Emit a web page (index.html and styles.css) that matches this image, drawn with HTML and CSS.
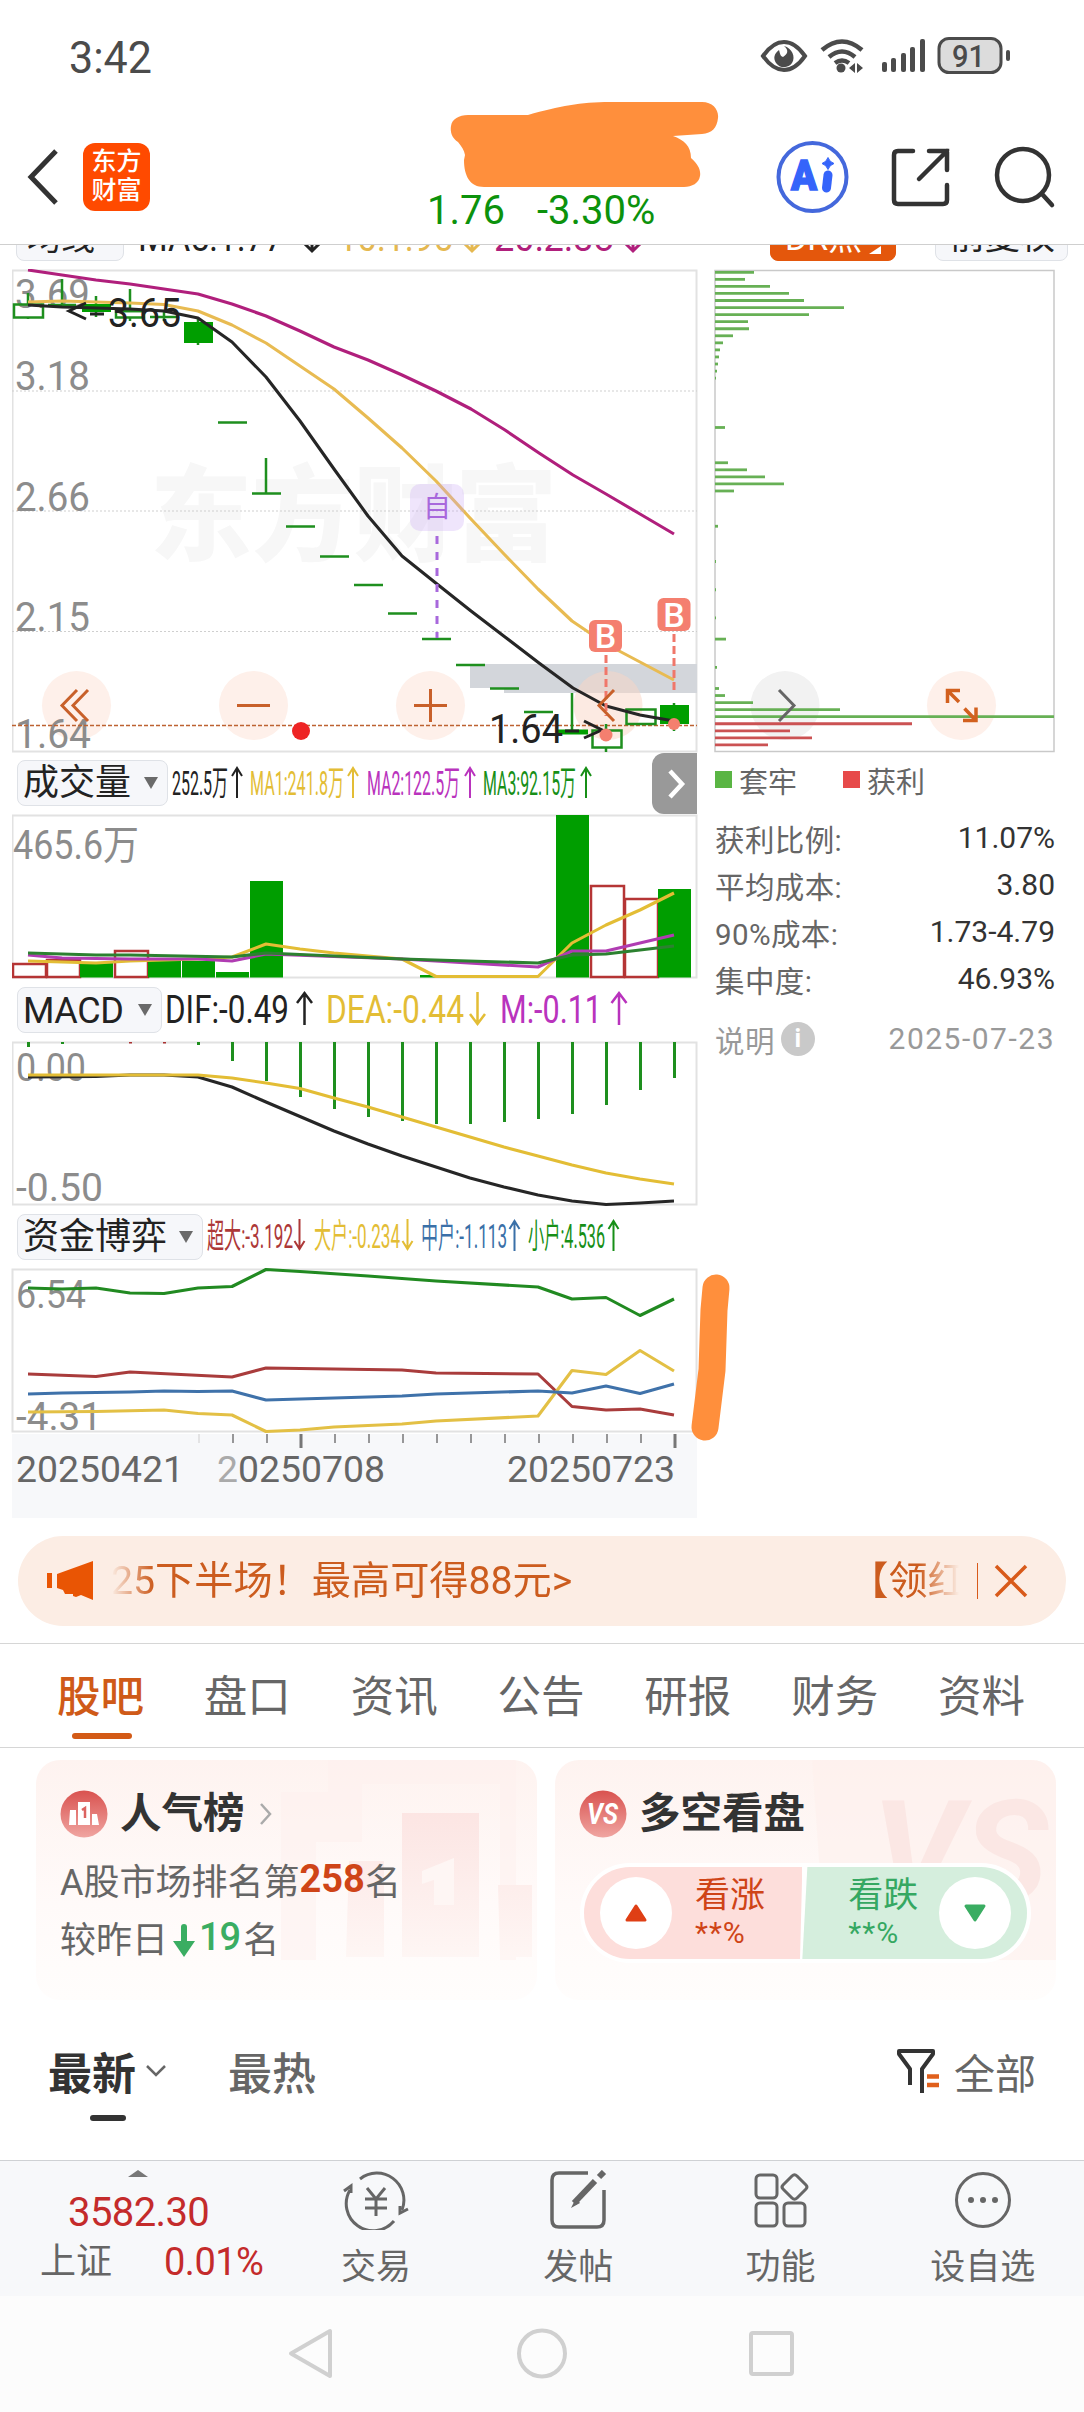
FILE: index.html
```html
<!DOCTYPE html>
<html lang="zh-CN">
<head>
  <meta charset="UTF-8">
  <title>个股行情</title>
  <meta name="viewport" content="width=device-width, initial-scale=1.0">
  <link rel="stylesheet" href="styles.css">
</head>
<body>

<svg class="defs" width="0" height="0">
  <defs>
    <path id="up" d="M0 31V1M-5 9L0 1L5 9"/>
    <path id="down" d="M0 0V30M-5 22L0 30L5 22"/>
    <linearGradient id="badge" x1="0" y1="0" x2="0" y2="1">
      <stop offset="0" stop-color="#d9524f"/>
      <stop offset="1" stop-color="#f0a5a1"/>
    </linearGradient>
    <linearGradient id="faint" x1="0" y1="0" x2="0" y2="1">
      <stop offset="0" stop-color="#fce5e3"/>
      <stop offset="1" stop-color="#fef6f4"/>
    </linearGradient>
  </defs>
</svg>

<div class="status">
  <svg width="1084" height="116" viewBox="0 0 1084 116">
    <text class="clock" x="69" y="73" textLength="83" lengthAdjust="spacingAndGlyphs">3:42</text>
    <g fill="none" stroke="#4b4b4b" stroke-width="4">
      <path d="M763 56C770 46 777 42 784 42S798 46 805 56C798 66 791 70 784 70S770 66 763 56Z"/>
      <path d="M822 50Q842 33 862 50M829 57Q842 46 855 57M835 63Q842 58 849 63" stroke-width="4.5"/>
    </g>
    <g fill="#4b4b4b">
      <path d="M784 46C789 50 788 54 783 57C780 56 780 53 779 50C774 54 773 58 776 63C780 69 789 68 792 63C796 57 792 48 784 46Z"/>
      <circle cx="841" cy="68" r="4.5"/>
      <path d="M849 68L855 63V73ZM863 68L857 63V73Z"/>
      <rect x="882" y="62" width="5" height="10" rx="2"/>
      <rect x="891" y="58" width="5" height="14" rx="2"/>
      <rect x="901" y="53" width="5" height="19" rx="2"/>
      <rect x="910" y="47" width="5" height="25" rx="2"/>
      <rect x="920" y="39" width="5" height="33" rx="2"/>
      <rect x="1006" y="50" width="4" height="11" rx="2"/>
    </g>
    <rect x="939" y="38.500" width="62" height="34" rx="10" fill="#dcdcdc" stroke="#4b4b4b" stroke-width="3"/>
    <text class="level" x="952" y="67" textLength="33" lengthAdjust="spacingAndGlyphs">91</text>
  </svg>
</div>

<header>
  <svg class="back" width="34" height="58" viewBox="0 0 34 58"><path d="M31 3L6 29L31 55" fill="none" stroke="#333" stroke-width="5"/></svg>
  <div class="logo">东方<br>财富</div>
  <div class="quote">
    <svg class="scribble" width="270" height="88" viewBox="450 101 270 88">
      <path fill="#ff8f3c" d="M468 115H528C560 106 580 102 610 102H702C713 102 719 110 718 118C717 128 712 133 702 134L673 136C684 140 691 146 691 158C698 164 701 170 700 176C699 183 692 187 684 187H484C470 187 464 176 464 160L465 155C464 150 462 147 458 142C452 138 450 132 451 126C452 119 459 115 468 115Z"/>
    </svg>
    <div class="price"><span>1.76</span><span>-3.30%</span></div>
  </div>
  <svg class="tools" width="290" height="80" viewBox="770 137 290 80">
    <circle cx="812.500" cy="177" r="34" fill="none" stroke="#4468dc" stroke-width="4"/>
    <text class="ai" x="791" y="190" textLength="26" lengthAdjust="spacingAndGlyphs">A</text>
    <path d="M828 175L826.500 188" stroke="#3564fa" stroke-width="9" stroke-linecap="round"/>
    <path d="M828 157.500Q829.500 162 834 163.500Q829.500 165 828 169.500Q826.500 165 822 163.500Q826.500 162 828 157.500Z" fill="#3564fa" stroke="#3564fa"/>
    <g fill="none" stroke="#333" stroke-width="4.500" stroke-linecap="round">
      <path d="M913 151H898Q894 151 894 155V200Q894 204 898 204H943Q947 204 947 200V185"/>
      <path d="M929 151H947V170M947 151L919 179"/>
      <circle cx="1023" cy="175" r="26"/>
      <path d="M1042 194L1052 205"/>
    </g>
  </svg>
</header>

<div class="ma-row">
  <div class="pill ma-pill">均线<i></i></div>
  <svg class="legend" width="640" height="46" viewBox="126 215 640 46">
    <text x="138" y="251" textLength="146" lengthAdjust="spacingAndGlyphs" fill="#222">MA5:1.77</text>
    <text x="338" y="251" textLength="115" lengthAdjust="spacingAndGlyphs" fill="#e5b850">10:1.95</text>
    <text x="494" y="251" textLength="120" lengthAdjust="spacingAndGlyphs" fill="#b01f7c">20:2.38</text>
    <g fill="none" stroke-width="3">
      <path d="M312 225V251M304 243L312 251L320 243" stroke="#222"/>
      <path d="M472 225V251M464 243L472 251L480 243" stroke="#e5b850"/>
      <path d="M633 225V251M625 243L633 251L641 243" stroke="#b01f7c"/>
    </g>
  </svg>
  <div class="pill dr">DR点<b></b></div>
  <div class="pill adjust">前复权</div>
</div>

<div class="board">
  <div class="charts">

    <!-- K line -->
    <svg width="686" height="484" viewBox="12 269 686 484">
      <text class="watermark" x="150" y="553" textLength="407" lengthAdjust="spacingAndGlyphs">东方财富</text>
      <rect class="frame" x="12.500" y="270.500" width="684" height="481"/>
      <path class="grid" d="M12 391H697M12 511H697M12 631.500H697"/>
      <path d="M470 664H697V693H504V688H470Z" fill="#d3d6db"/>
      <g fill="#fef0ea">
        <circle cx="76.500" cy="705.500" r="34.500"/>
        <circle cx="253.500" cy="705.500" r="34.500"/>
        <circle cx="430.500" cy="705.500" r="34.500"/>
        <circle cx="608" cy="705.500" r="34.500" fill="#f9d6c6" fill-opacity=".5"/>
      </g>
      <g class="axis">
        <text x="15" y="308" textLength="75" lengthAdjust="spacingAndGlyphs">3.69</text>
        <text x="15" y="390" textLength="75" lengthAdjust="spacingAndGlyphs">3.18</text>
        <text x="15" y="511" textLength="75" lengthAdjust="spacingAndGlyphs">2.66</text>
        <text x="15" y="631" textLength="75" lengthAdjust="spacingAndGlyphs">2.15</text>
        <text x="15" y="748" textLength="76" lengthAdjust="spacingAndGlyphs">1.64</text>
      </g>
      <path d="M12 725.500H697" stroke="#bd6231" stroke-width="1.500" stroke-dasharray="4 2"/>
      <g class="candle">
        <path d="M28 293V304M28 318V319M62 279V305M48 305H76M96 296V317M130 289V311M130 318V321M116 311H144M164 311V321M150 317H178M198 318V345"/>
        <path d="M218 422.500H247M266 458V493M252 493.500H281M286 526.500H315M320 556.500H349M354 585H383M388 613.500H417M422 639H451M456 665H485M490 688.500H519M524 712H553M572 693V732M606 724V730M606 748V752M674 703V731"/>
        <path d="M14 304.500H43V317.500H14ZM116 311H144V317.500H116ZM592.500 730.500H621.500V747.500H592.500ZM626.500 709.500H655.500V724H626.500Z"/>
        <path class="solid" d="M82 304H111V312H82ZM184 322H213V343H184ZM558 729.500H588V734.500H558ZM660 705H689V724H660Z"/>
      </g>
      <g class="line">
        <polyline stroke="#b01f7c" points="28,270 62,275 96,280 130,284 164,289 198,294 232,304 266,316 300,331 334,347 368,360 402,375 436,391 471,409 505,430 539,453 573,475 606,494 640,514 674,534"/>
        <polyline stroke="#e8bb52" points="28,302 62,301 96,302 130,303 164,304.500 198,311 232,325 266,343 300,366 334,389 368,418 402,448 436,481 470,518 504,554 538,589 572,621 606,644 640,662 674,680"/>
        <polyline stroke="#262626" points="28,305 62,307 96,308 130,309 164,311 198,318 232,342 266,377 300,421 334,469 368,516 402,556 437,584 471,611 505,637 539,663 573,688 606,706 640,715 674,721"/>
      </g>
      <g class="mark">
        <text x="108" y="327" textLength="73" lengthAdjust="spacingAndGlyphs">3.65</text>
        <text x="489" y="743" textLength="74" lengthAdjust="spacingAndGlyphs">1.64</text>
        <path d="M86 303L69 311L86 319M90 314H104M565 731H579M584 721L602 730L584 738"/>
      </g>
      <rect x="410" y="484" width="54" height="47" rx="10" fill="#c9a8f5" fill-opacity=".3"/>
      <text class="zi" x="423" y="517">自</text>
      <path d="M437 536V638" stroke="#a868dc" stroke-width="3" stroke-dasharray="8 8"/>
      <g fill="#f47f6f">
        <rect x="589" y="620" width="33" height="32" rx="6"/>
        <rect x="657.500" y="598" width="33" height="33" rx="6"/>
        <circle cx="606" cy="735" r="6.500"/>
        <circle cx="674" cy="724" r="6"/>
      </g>
      <path d="M606 655V716M674 634V691" stroke="#f0776a" stroke-width="3" stroke-dasharray="8 4"/>
      <g class="buy">
        <text x="605.500" y="648">B</text>
        <text x="674" y="627">B</text>
      </g>
      <g fill="none" stroke="#c8602a" stroke-width="3">
        <path d="M77 690L62 705.500L77 721M88 690L73 705.500L88 721M237 705.500H270M414 705.500H447M430.500 689V722M614 690L599 705.500L614 721"/>
      </g>
      <circle cx="301" cy="731" r="9" fill="#ee2424"/>
    </svg>

    <!-- volume -->
    <div class="ind-row">
      <div class="pill w-vol">成交量<i></i></div>
      <svg class="legend" width="484" height="61" viewBox="168 753 484 61">
        <text x="172" y="795" textLength="56" lengthAdjust="spacingAndGlyphs" fill="#222">252.5万</text>
        <text x="250" y="795" textLength="94" lengthAdjust="spacingAndGlyphs" fill="#e3bd35">MA1:241.8万</text>
        <text x="367" y="795" textLength="93" lengthAdjust="spacingAndGlyphs" fill="#b933bd">MA2:122.5万</text>
        <text x="483" y="795" textLength="93" lengthAdjust="spacingAndGlyphs" fill="#178f17">MA3:92.15万</text>
        <g fill="none" stroke-width="2">
          <use href="#up" x="237" y="767" stroke="#222"/>
          <use href="#up" x="353" y="767" stroke="#e3bd35"/>
          <use href="#up" x="470" y="767" stroke="#b933bd"/>
          <use href="#up" x="586" y="767" stroke="#178f17"/>
        </g>
      </svg>
      <div class="expand"><svg width="20" height="32" viewBox="0 0 20 32"><path d="M4 3L16 16L4 29" fill="none" stroke="#fff" stroke-width="4.500"/></svg></div>
    </div>
    <svg width="686" height="166" viewBox="12 814 686 166">
      <rect class="frame" x="12.500" y="815.500" width="684" height="162"/>
      <text class="axis" x="13" y="859" textLength="126" lengthAdjust="spacingAndGlyphs">465.6万</text>
      <g id="volume"></g>
      <g class="line">
        <polyline stroke="#e3bd35" points="28,961 62,962 96,963 130,961 198,959 232,957 266,944 300,949 334,953 402,959 436,976.500 538,976.500 572,943 606,925 640,910 674,893"/>
        <polyline stroke="#b03cb2" points="28,955 62,958 130,959 198,959 232,961 266,954 402,959 538,967 572,951 606,951 674,935"/>
        <polyline stroke="#2c8130" points="28,953 96,955 130,955 232,957 266,953 334,956 402,959 538,963 572,955 606,954 674,946"/>
      </g>
    </svg>

    <!-- MACD -->
    <div class="ind-row">
      <div class="pill w-macd"><span>MACD</span><i></i></div>
      <svg class="legend big" width="530" height="61" viewBox="162 980 530 61">
        <text x="165" y="1023" textLength="124" lengthAdjust="spacingAndGlyphs" fill="#222">DIF:-0.49</text>
        <text x="326" y="1023" textLength="138" lengthAdjust="spacingAndGlyphs" fill="#e3bd35">DEA:-0.44</text>
        <text x="500" y="1023" textLength="102" lengthAdjust="spacingAndGlyphs" fill="#b933bd">M:-0.11</text>
        <g fill="none" stroke-width="2.500">
          <path d="M304.500 1025V993M297 1003L304.500 993L312 1003" stroke="#222"/>
          <path d="M477.500 992V1024M470 1014L477.500 1024L485 1014" stroke="#e3bd35"/>
          <path d="M619 1025V993M611.500 1003L619 993L626.500 1003" stroke="#b933bd"/>
        </g>
      </svg>
    </div>
    <svg width="686" height="166" viewBox="12 1041 686 166">
      <rect class="frame" x="12.500" y="1042.500" width="684" height="162"/>
      <text class="axis sm" x="16" y="1081" textLength="70" lengthAdjust="spacingAndGlyphs">0.00</text>
      <text class="axis sm" x="16" y="1201" textLength="87" lengthAdjust="spacingAndGlyphs">-0.50</text>
      <g id="macd"></g>
      <g class="line">
        <polyline stroke="#262626" points="28,1077 96,1076.500 130,1075 164,1075 198,1077 232,1087 266,1102 300,1116.500 334,1131 368,1144 402,1156 436,1167 470,1178 504,1187 538,1195 572,1201 606,1204.500 640,1203 674,1201"/>
        <polyline stroke="#e3bd35" points="28,1075 198,1075 232,1078 266,1083 300,1088.500 334,1098 368,1107 402,1117 436,1127 470,1137 504,1147 538,1156 572,1165 606,1173 640,1179 674,1184"/>
      </g>
    </svg>

    <!-- funds -->
    <div class="ind-row">
      <div class="pill w-fund">资金博弈<i></i></div>
      <svg class="legend" width="490" height="61" viewBox="203 1207 490 61">
        <text x="207" y="1248" textLength="86" lengthAdjust="spacingAndGlyphs" fill="#ad3838">超大:-3.192</text>
        <text x="314" y="1248" textLength="86" lengthAdjust="spacingAndGlyphs" fill="#e3bd35">大户:-0.234</text>
        <text x="421" y="1248" textLength="86" lengthAdjust="spacingAndGlyphs" fill="#3a70a8">中户:-1.113</text>
        <text x="528" y="1248" textLength="77" lengthAdjust="spacingAndGlyphs" fill="#178f17">小户:4.536</text>
        <g fill="none" stroke-width="2">
          <use href="#down" x="299.500" y="1219" stroke="#ad3838"/>
          <use href="#down" x="407.500" y="1219" stroke="#e3bd35"/>
          <use href="#up" x="514.500" y="1220" stroke="#3a70a8"/>
          <use href="#up" x="613.500" y="1220" stroke="#178f17"/>
        </g>
      </svg>
    </div>
    <svg class="funds" width="686" height="166" viewBox="12 1268 686 166">
      <rect class="frame" x="12.500" y="1269.500" width="684" height="162"/>
      <text class="axis sm" x="16" y="1308" textLength="70" lengthAdjust="spacingAndGlyphs">6.54</text>
      <text class="axis sm" x="16" y="1430" textLength="86" lengthAdjust="spacingAndGlyphs">-4.31</text>
      <g class="line">
        <polyline stroke="#218a21" points="28,1288 62,1289 96,1288 130,1293 164,1293.500 198,1288 232,1286.500 266,1269.500 300,1271.500 368,1276 436,1281 538,1287 572,1299 606,1297.500 640,1315.500 674,1299"/>
        <polyline stroke="#a93c3c" points="28,1374 96,1376.500 130,1372 232,1377 266,1368 402,1370 436,1373 538,1374 572,1406.500 606,1410 640,1409 674,1415"/>
        <polyline stroke="#e3c045" points="28,1412 96,1411.500 164,1410 198,1413.500 232,1415 266,1431.500 300,1430 334,1427 402,1424 436,1421 538,1416 572,1370.500 606,1374.500 640,1350.500 674,1371"/>
        <polyline stroke="#3f72aa" points="28,1394 62,1393 96,1392.500 130,1392 164,1391 198,1391.500 232,1391 266,1400 402,1396 436,1394 538,1391 572,1393 606,1386 640,1393.500 674,1384"/>
      </g>
      <path d="M716 1288L714 1310L712 1370L705 1427" fill="none" stroke="#ff8f3c" stroke-width="27" stroke-linecap="round" stroke-linejoin="round"/>
    </svg>
    <svg class="dates" width="685" height="84" viewBox="12 1434 685 84">
      <g id="ticks"></g>
      <text x="16" y="1482" textLength="168" lengthAdjust="spacingAndGlyphs">20250421</text>
      <text x="217" y="1482" textLength="168" lengthAdjust="spacingAndGlyphs"><tspan fill="#aaa">2</tspan>0250708</text>
      <text x="507" y="1482" textLength="168" lengthAdjust="spacingAndGlyphs">20250723</text>
    </svg>
  </div>

  <!-- cost distribution -->
  <div class="chips">
    <svg width="342" height="484" viewBox="714 269 342 484">
      <circle cx="785" cy="705.500" r="34.500" fill="#f2f2f2"/>
      <circle cx="961.500" cy="705.500" r="34.500" fill="#fef0ea"/>
      <rect x="715" y="270.500" width="339" height="481" fill="none" stroke="#c9c9c9" stroke-width="1.500"/>
      <g id="chips"></g>
      <path d="M779 690L794 705.500L779 721" fill="none" stroke="#666" stroke-width="3"/>
      <path d="M960 690.500H947.500V703M947.500 690.500L959 702M963 720.500H976V707.500M976 720.500L964.500 708.500" fill="none" stroke="#d2601e" stroke-width="3.500"/>
    </svg>
    <div class="key"><i class="green"></i><span>套牢</span><i class="red"></i><span>获利</span></div>
    <div class="stat"><span>获利比例:</span><b>11.07%</b></div>
    <div class="stat"><span>平均成本:</span><b>3.80</b></div>
    <div class="stat"><span>90%成本:</span><b>1.73-4.79</b></div>
    <div class="stat"><span>集中度:</span><b>46.93%</b></div>
    <div class="stat note"><span>说明</span><em>i</em><b>2025-07-23</b></div>
  </div>
</div>

<div class="banner">
  <svg width="48" height="42" viewBox="46 1560 48 42" fill="#e95504">
    <rect x="47" y="1573" width="5" height="15"/>
    <path d="M57 1574L93 1561V1600L81 1595L76 1597L73 1596V1594H65L63 1590L57 1588Z"/>
  </svg>
  <div class="marquee"><span>25下半场！最高可得88元&gt;</span><span class="next">【领红包】</span></div>
  <i class="bar"></i>
  <svg width="34" height="34" viewBox="0 0 34 34"><path d="M2 2L32 32M32 2L2 32" stroke="#d85a1a" stroke-width="3.500"/></svg>
</div>

<nav class="tabs">
  <a class="active">股吧</a><a>盘口</a><a>资讯</a><a>公告</a><a>研报</a><a>财务</a><a>资料</a>
</nav>

<div class="cards">
  <div class="card rank">
    <svg class="card-bg" width="501" height="240" viewBox="36 1760 501 240">
      <path d="M328 1760H516V1960H500V1784H362V1842H316V1960H281V1792H328Z" fill="#fdf0ed" opacity=".5"/>
      <path d="M402 1813H479V1957H402ZM349 1861H384V1957H346ZM498 1885H532V1957H500Z" fill="url(#faint)"/>
      <path d="M422 1871L454 1858V1905H434V1880L422 1884Z" fill="#fef6f4"/>
    </svg>
    <div class="title">
      <svg width="48" height="48" viewBox="0 0 48 48">
        <circle cx="24" cy="24" r="23.500" fill="url(#badge)"/>
        <path d="M10 20H16V35H9ZM18 12H30V35H18ZM32 24H37L39 35H32Z" fill="#fff"/>
        <path d="M22 20L25 18V28" fill="none" stroke="#dc6360" stroke-width="2.500"/>
      </svg>
      <h2>人气榜</h2>
      <svg class="more" width="14" height="24" viewBox="0 0 14 24"><path d="M2 2L11 12L2 22" fill="none" stroke="#aaa" stroke-width="2.500"/></svg>
    </div>
    <p>A股市场排名第<b>258</b>名</p>
    <p class="second">较昨日<svg width="24" height="34" viewBox="0 0 24 34"><path d="M12 3V20" stroke="#3aad62" stroke-width="6" stroke-linecap="round"/><path d="M1 17H23L12 33Z" fill="#3aad62"/></svg><b class="down">19</b>名</p>
  </div>
  <div class="card">
    <svg class="card-bg" width="501" height="240" viewBox="555 1760 501 240">
      <path d="M812 1760H1056V1960H826Z" fill="#fdf0ed" opacity=".6"/>
      <text class="big-vs" x="872" y="1902" textLength="176" lengthAdjust="spacingAndGlyphs">VS</text>
    </svg>
    <div class="title">
      <svg width="48" height="48" viewBox="0 0 48 48">
        <circle cx="24" cy="24" r="23.500" fill="url(#badge)"/>
        <text class="vs" x="8" y="34" textLength="31" lengthAdjust="spacingAndGlyphs">VS</text>
      </svg>
      <h2>多空看盘</h2>
    </div>
    <div class="vote">
      <div class="rise"><span class="knob"><svg width="24" height="20" viewBox="0 0 24 20"><path d="M12 3L21 17H3Z" fill="#df3f15" stroke="#df3f15" stroke-width="3" stroke-linejoin="round"/></svg></span><div>看涨<small>**%</small></div></div>
      <div class="fall"><div>看跌<small>**%</small></div><span class="knob"><svg width="24" height="20" viewBox="0 0 24 20"><path d="M12 17L21 3H3Z" fill="#3aad62" stroke="#3aad62" stroke-width="3" stroke-linejoin="round"/></svg></span></div>
    </div>
  </div>
</div>

<div class="sort">
  <a class="active">最新</a>
  <svg width="22" height="16" viewBox="0 0 22 16"><path d="M2 3L11 12L20 3" fill="none" stroke="#666" stroke-width="2.500"/></svg>
  <a class="hot">最热</a>
  <svg class="funnel" width="44" height="48" viewBox="895 2048 44 48">
    <path d="M909 2086V2070L898 2055V2052H932V2055L921 2070V2094" fill="none" stroke="#333" stroke-width="4" stroke-linejoin="round"/>
    <path d="M926 2077.500H938M926 2086H938" stroke="#e0601c" stroke-width="4.500"/>
  </svg>
  <a class="all">全部</a>
</div>

<div class="dock">
  <div class="index">
    <i class="caret"></i>
    <div class="point">3582.30</div>
    <div class="change"><span>上证</span><b>0.01%</b></div>
  </div>
  <div class="item">
    <svg width="66" height="60" viewBox="0 0 66 60" fill="none" stroke="#666" stroke-width="3">
      <path d="M17 9A27 27 0 0 1 59 40M51 51A27 27 0 0 1 7 20"/>
      <path d="M1 21L8 16V23M65 39L57 43V36"/>
      <path d="M24 18L33 29L42 18M22 29H44M22 38H44M33 29V46"/>
    </svg>
    <span>交易</span>
  </div>
  <div class="item">
    <svg width="66" height="60" viewBox="0 0 66 60" fill="none" stroke="#666" stroke-width="3.500">
      <path d="M43 3H14Q7 3 7 10V50Q7 57 14 57H52Q59 57 59 50V20"/>
      <path d="M50 11L29 33" stroke-width="6"/><path d="M31 28L26 38L35 33Z" fill="#666" stroke="none"/><path d="M54 7L59 2" stroke-width="6"/>
    </svg>
    <span>发帖</span>
  </div>
  <div class="item">
    <svg width="66" height="60" viewBox="0 0 66 60" fill="none" stroke="#666" stroke-width="3">
      <rect x="8" y="5" width="21" height="23" rx="4"/>
      <rect x="8" y="33" width="21" height="23" rx="4"/>
      <rect x="36" y="33" width="21" height="23" rx="4"/>
      <path d="M44 6Q46.500 3.500 49 6L58 15Q60 17 58 19L49 28Q46.500 30.500 44 28L35 19Q33 17 35 15Z"/>
    </svg>
    <span>功能</span>
  </div>
  <div class="item">
    <svg width="66" height="60" viewBox="0 0 66 60">
      <circle cx="33" cy="30" r="26.500" fill="none" stroke="#666" stroke-width="3"/>
      <g fill="#666"><circle cx="21" cy="30" r="3"/><circle cx="33" cy="30" r="3"/><circle cx="45" cy="30" r="3"/></g>
    </svg>
    <span>设自选</span>
  </div>
</div>

<div class="sysnav">
  <svg width="1084" height="116" viewBox="0 2296 1084 116" fill="none" stroke="#d0d0d0" stroke-width="4" stroke-linejoin="round">
    <path d="M330 2331V2376L291 2353.500Z"/>
    <circle cx="542" cy="2353.500" r="23"/>
    <rect x="751" y="2333" width="41" height="41" rx="2"/>
  </svg>
</div>

<script>
  // [top, isUp] per trading day, null = almost no volume
  const volume = [[964, 1], [960, 1], [963, 0], [951, 1], [961, 0], [961, 0], [972, 0], [881, 0],
    null, null, null, null, [975, 0], null, null, null,
    [815, 0], [886, 1], [899, 1], [889, 0]];
  const macd = [1047, 1044, 0, -1, -1, 1045, 1061, 1081, 1097, 1109, 1117, 1121, 1124, 1124, 1122, 1119, 1114, 1105, 1090, 1078];
  // price level -> bar length
  const chips = {0: 39, 1: 30, 2: 55, 3: 74, 4: 89, 5: 129, 6: 94, 7: 33, 8: 34, 9: 18, 10: 8, 11: 5, 12: 4, 13: 3, 14: 2, 15: 1,
    22: 10, 27: 13, 28: 32, 29: 50, 30: 69, 31: 19, 36: 3, 41: 1, 45: 1, 49: 1, 52: 11, 56: 2,
    59: 4, 60: 10, 61: 38, 62: 125, 63: 339, 64: 197, 65: 75, 66: 97, 67: 53};

  let html = '';
  volume.forEach((v, i) => {
    if (!v) return;
    const x = 12 + 34 * i;
    html += v[1]
      ? `<rect x="${x + 1}" y="${v[0]}" width="33" height="${977 - v[0]}" fill="#fff" stroke="#b53535" stroke-width="2.5"/>`
      : `<rect x="${x}" y="${v[0]}" width="33" height="${977.5 - v[0]}" fill="#009e00"/>`;
  });
  document.getElementById('volume').innerHTML = html;

  html = '';
  macd.forEach((y, i) => {
    const x = 28.5 + 34 * i;
    if (y) html += `<path d="M${x} 1042V${y > 0 ? y : 1043.5}" stroke="${y > 0 ? '#1e8f1e' : '#a33'}" stroke-width="3"/>`;
  });
  document.getElementById('macd').innerHTML = html;

  html = '';
  for (const k in chips) {
    const y = 272.3 + 7.054 * k;
    html += `<path d="M715 ${y}h${chips[k]}" stroke="${k > 63 ? '#cb5253' : '#67b055'}" stroke-width="2.8"/>`;
  }
  document.getElementById('chips').innerHTML = html;

  html = '';
  for (let i = 0; i < 15; i++) {
    const major = i === 3 || i === 14;
    html += `<path d="M${199 + 34 * i} 1434v${major ? 14 : 9}" stroke="${i ? '#777' : '#ddd'}" stroke-width="${major ? 3 : 1.5}"/>`;
  }
  document.getElementById('ticks').innerHTML = html;
</script>

</body>
</html>
```
FILE: styles.css
```css
* { box-sizing: border-box; }
body {
  margin: 0;
  width: 1084px;
  background: #fff;
  color: #333;
  font-family: Roboto, "Noto Sans CJK SC", sans-serif;
}
svg { display: block; flex: none; }
.defs { position: absolute; }

.status { height: 116px; }
.clock { font-size: 45px; fill: #4b4b4b; }
.level { font-size: 31px; font-weight: 500; fill: #4b4b4b; }

header {
  height: 129px;
  display: flex;
  border-bottom: 1px solid #cfcfcf;
}
.back { margin: 32px 0 0 25px; }
.logo {
  width: 67px;
  height: 68px;
  margin: 27px 0 0 24px;
  padding-top: 4px;
  border-radius: 12px;
  background: #ff4a00;
  color: #fff;
  font-size: 25px;
  font-weight: 500;
  line-height: 29px;
  text-align: center;
}
.quote { position: relative; width: 570px; margin-left: 50px; }
.scribble { position: absolute; left: 250px; top: -15px; }
.price {
  display: flex;
  gap: 32px;
  padding: 72px 0 0 227px;
  color: #0c920c;
  font-size: 40px;
  line-height: 46px;
}
.tools { margin-top: 21px; }
.ai { font-size: 42px; font-weight: 900; fill: #3564fa; stroke: #3564fa; stroke-width: 1.5; }

.pill {
  flex: none;
  display: flex;
  align-items: center;
  height: 46px;
  padding-left: 5px;
  border: 1px solid #dfe2e7;
  border-radius: 8px;
  background: #f6f7fa;
  color: #222;
  font-size: 36px;
  line-height: 44px;
  white-space: nowrap;
}
.pill i {
  margin-left: auto;
  margin-right: 9px;
  border: 7px solid transparent;
  border-top: 12px solid #6a6a6a;
  border-bottom: 0;
}
.ma-row {
  height: 24px;
  padding: 0 16px 8px;
  display: flex;
  align-items: flex-end;
  overflow: hidden;
}
.ma-pill { width: 108px; padding-left: 10px; font-size: 34px; }
.ma-pill i { display: none; }
.ma-row .legend { margin-left: 2px; }
.ma-row .legend text { font-size: 38px; }
.dr {
  width: 126px;
  margin-left: 4px;
  padding-left: 14px;
  background: #e4570c;
  border-color: #e4570c;
  color: #fff;
  font-size: 34px;
}
.dr b {
  margin: 24px 0 0 7px;
  border-left: 12px solid transparent;
  border-bottom: 8px solid #fff;
}
.adjust { width: 133px; margin-left: 39px; padding-left: 14px; font-size: 35px; }

.board { display: grid; grid-template-columns: 686px 342px; gap: 16px; padding-left: 12px; }
.funds { overflow: visible; }
.frame { fill: none; stroke: #e2e2e2; stroke-width: 2; }
.grid { stroke: #cfcfcf; stroke-dasharray: 2 2; fill: none; }
.axis { font-size: 40px; fill: #8c8c8c; }
.axis.sm { font-size: 38px; }
.watermark { font-size: 104px; font-weight: 900; fill: #f7f7f7; }
.candle { fill: none; stroke: #1e8f1e; stroke-width: 2.5; }
.candle .solid { fill: #009e00; stroke: none; }
.line { fill: none; stroke-width: 3.1; stroke-linejoin: round; }
.mark { fill: #222; font-size: 40px; }
.mark path { fill: none; stroke: #222; stroke-width: 3; }
.zi { font-size: 28px; fill: #a868dc; }
.buy { font-size: 34px; font-weight: 500; fill: #fff; text-anchor: middle; }

.ind-row { display: flex; height: 61px; padding-left: 5px; }
.ind-row .pill { margin-top: 7px; }
.w-vol { width: 151px; }
.w-macd { width: 145px; }
.w-macd span { padding-top: 2px; letter-spacing: -0.4px; }
.w-fund { width: 186px; }
.legend text { font-size: 34px; }
.legend.big text { font-size: 39px; }
.expand {
  width: 45px;
  padding: 15px 0 0 14px;
  border-radius: 12px 0 0 12px;
  background: #999;
}
.dates { background: #f7f8fa; }
.dates text { font-size: 36px; fill: #666; }

.key { display: flex; align-items: center; height: 53px; padding-left: 1px; font-size: 29px; color: #666; }
.key i { width: 17px; height: 17px; margin-right: 7px; }
.key span { width: 104px; }
.green { background: #5ab544; }
.red { background: #e74a4a; }
.stat { display: flex; align-items: center; height: 47px; padding: 0 1px 0 1px; font-size: 30px; color: #666; }
.stat span { font-size: 29.5px; letter-spacing: 0.4px; }
.key + .stat { margin-top: 8px; }
.stat b { margin-left: auto; font-weight: normal; color: #333; }
.note { margin-top: 13px; color: #999; }
.note b { color: #999; letter-spacing: 1.5px; }
.note em {
  width: 34px;
  height: 34px;
  margin-left: 6px;
  border-radius: 50%;
  background: #c9c9c9;
  color: #fff;
  font: bold 25px/34px Roboto, sans-serif;
  text-align: center;
}

.banner {
  height: 90px;
  margin: 21px 18px 0;
  padding: 0 38px 0 28px;
  display: flex;
  align-items: center;
  border-radius: 45px;
  background: #fcede4;
}
.board { min-height: 1249px; }
.board + .banner { margin-top: 18px; }
.marquee {
  display: flex;
  width: 850px;
  margin-left: 17px;
  overflow: hidden;
  color: #cc5c1e;
  font-size: 39.2px;
  line-height: 56px;
  white-space: nowrap;
  -webkit-mask-image: linear-gradient(90deg, transparent, #000 42px, #000 808px, transparent);
}
.next { margin-left: 277px; }
.bar { width: 1px; height: 36px; margin: 0 16px 0 18px; background: #d85a1a; }

.tabs {
  display: flex;
  height: 105px;
  margin-top: 17px;
  padding: 0 29px 0 27px;
  border-top: 1px solid #d6d6d6;
  border-bottom: 1px solid #d6d6d6;
}
.tabs a { position: relative; flex: 1; padding-top: 2px; font-size: 43.5px; line-height: 104px; text-align: center; color: #666; }
.tabs .active { color: #cf5a18; font-weight: 500; }
.tabs .active::after {
  content: "";
  position: absolute;
  left: 45px;
  bottom: 8px;
  width: 60px;
  height: 6px;
  border-radius: 3px;
  background: #d35a16;
}

.cards { display: flex; gap: 18px; padding: 12px 28px 0 36px; }
.card {
  position: relative;
  width: 501px;
  height: 240px;
  padding: 28px 24px 0;
  border-radius: 24px;
  overflow: hidden;
  background: linear-gradient(#fef3f0, #fffaf9 60%, #fffdfc);
}
.card-bg { position: absolute; left: 0; top: 0; }
.title, .card p, .vote { position: relative; }
.title { display: flex; align-items: center; height: 52px; }
.title h2 { margin: 0 0 0 12px; font-size: 41.5px; line-height: 52px; }
.more { margin-left: 14px; }
.card p { display: flex; align-items: center; height: 58px; margin: 10px 0 0; font-size: 36px; color: #666; }
.card p b { color: #cf4417; font-size: 38px; }
.card .second { margin: 0; }
.second svg { margin: 8px 3px 0 4px; }
.card p .down { margin-right: 3px; color: #3aad62; font-size: 38px; font-weight: 500; letter-spacing: -1px; }
.vs { font: italic bold 29px Roboto, sans-serif; fill: #fff; }
.big-vs { font: italic bold 142px Roboto, sans-serif; fill: #fbe7e4; }
.vote {
  display: flex;
  width: 451px;
  height: 100px;
  margin: 23px 0 0 1px;
  border: 4px solid #fff;
  border-radius: 50px;
  overflow: hidden;
  background: #fff;
  font-size: 35px;
  line-height: 40px;
}
.rise, .fall { display: flex; align-items: center; }
.rise { width: 221px; padding-left: 16px; background: #fddedb; color: #cf4417; clip-path: polygon(0 0, 100% 0, 216px 100%, 0 100%); }
.fall { width: 227px; padding-left: 46px; background: #d5eedd; color: #35a862; clip-path: polygon(5px 0, 100% 0, 100% 100%, 0 100%); }
.rise div, .fall div { padding-top: 4px; }
.knob { display: flex; align-items: center; justify-content: center; width: 72px; height: 72px; border-radius: 50%; background: #fff; }
.rise .knob { margin-right: 23px; }
.fall .knob { margin-left: 21px; }
.vote small { display: block; height: 38px; font-size: 30px; line-height: 34px; letter-spacing: 1px; }

.sort { display: flex; align-items: center; height: 160px; padding: 0 48px 18px; }
.sort a { position: relative; font-size: 44px; color: #666; }
.sort .active { color: #333; font-weight: bold; }
.sort .active::after {
  content: "";
  position: absolute;
  left: 42px;
  bottom: -18px;
  width: 36px;
  height: 6px;
  border-radius: 3px;
  background: #333;
}
.sort a + svg { margin-left: 9px; }
.sort .hot { margin-left: 61px; font-weight: 500; }
.sort .hot + .funnel { margin-left: auto; }
.sort .all { margin-left: 14px; font-size: 41px; }

.dock {
  display: flex;
  height: 136px;
  border-top: 1px solid #cfd1d4;
  background: #f7f8fa;
  color: #666;
}
.index { width: 275px; }
.caret { display: block; width: 0; margin: 9px 0 0 128px; border: 10px solid transparent; border-top: 0; border-bottom: 7px solid #777; }
.point { margin: 11px 0 0 68px; color: #c42b2b; font-size: 40px; line-height: 50px; letter-spacing: -0.6px; }
.change { display: flex; gap: 52px; padding-left: 40px; font-size: 36px; line-height: 48px; }
.change b { color: #c42b2b; font-weight: normal; font-size: 38px; letter-spacing: -0.5px; }
.item { flex: 1; display: flex; flex-direction: column; align-items: center; padding-top: 9px; }
.item span { margin-top: 12px; font-size: 35px; line-height: 52px; }

.sysnav { height: 116px; background: #fcfcfc; }
```
